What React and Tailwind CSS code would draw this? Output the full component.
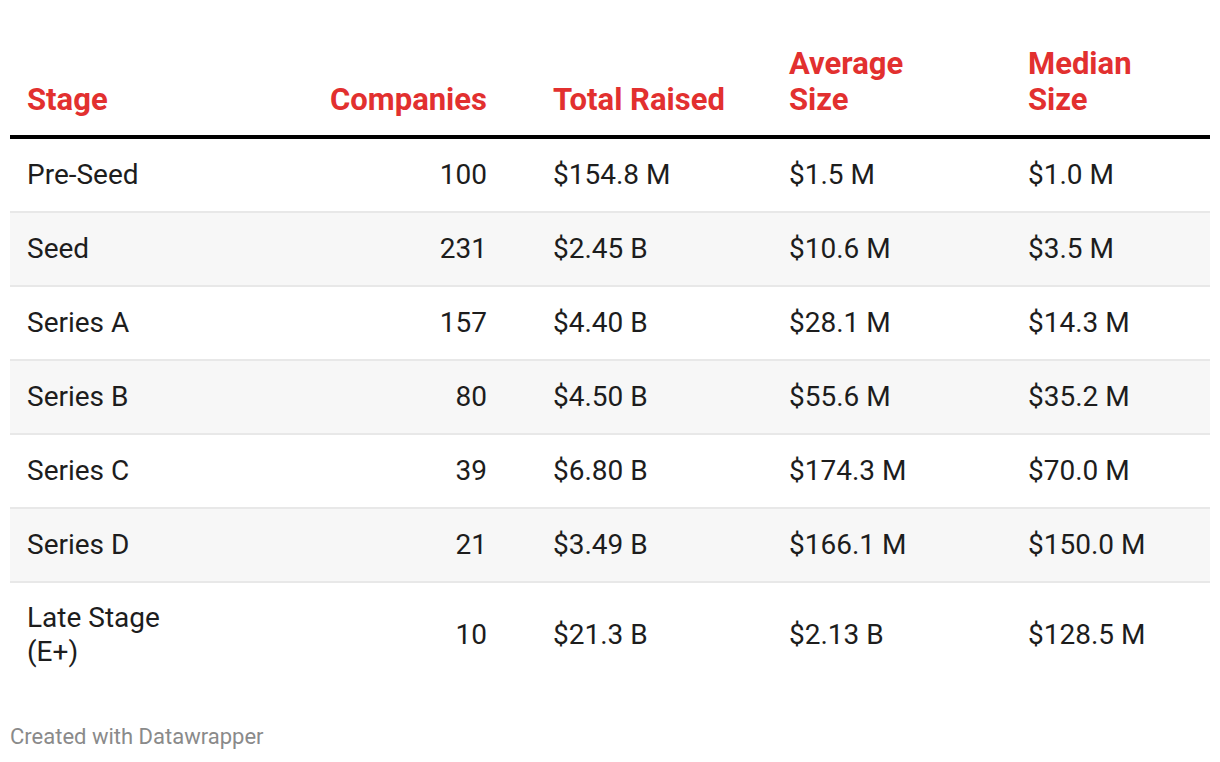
const rows = [
  ['Pre-Seed', '100', '$154.8 M', '$1.5 M', '$1.0 M'],
  ['Seed', '231', '$2.45 B', '$10.6 M', '$3.5 M'],
  ['Series A', '157', '$4.40 B', '$28.1 M', '$14.3 M'],
  ['Series B', '80', '$4.50 B', '$55.6 M', '$35.2 M'],
  ['Series C', '39', '$6.80 B', '$174.3 M', '$70.0 M'],
  ['Series D', '21', '$3.49 B', '$166.1 M', '$150.0 M'],
  ['Late Stage (E+)', '10', '$21.3 B', '$2.13 B', '$128.5 M'],
]

const cols = 'grid grid-cols-[250px_244px_268px_239px_199px]'

export default function App() {
  return (
    <div className="w-[1220px] h-[762px] bg-white px-[10px] pt-[46px] font-['Roboto',sans-serif] text-[#1d1d1d]">
      {/* header */}
      <div className={`${cols} items-end border-b-4 border-black pb-[17px] text-[31px] font-bold leading-[36px] text-[#e2302f]`}>
        <div className="px-[17px]">Stage</div>
        <div className="px-[17px] text-right">Companies</div>
        <div className="pl-[49px] pr-[17px]">Total Raised</div>
        <div className="px-[17px]">Average<br />Size</div>
        <div className="px-[17px]">Median<br />Size</div>
      </div>

      {/* body rows */}
      {rows.map((r, i) => {
        const last = i === rows.length - 1
        return (
          <div
            key={r[0]}
            className={`${cols} items-center text-[28px] leading-[34px] ${i % 2 ? 'bg-[#f7f7f7]' : 'bg-white'} ${last ? 'h-[104px]' : 'h-[74px] border-b-2 border-[#e8e8e8]'}`}
          >
            <div className="px-[17px] max-w-[190px]">{r[0]}</div>
            <div className="px-[17px] text-right">{r[1]}</div>
            <div className="pl-[49px] pr-[17px]">{r[2]}</div>
            <div className="px-[17px]">{r[3]}</div>
            <div className="px-[17px]">{r[4]}</div>
          </div>
        )
      })}

      <div className="mt-[38px] text-[22px] leading-[24px] text-[#8a8a8a]">Created with Datawrapper</div>
    </div>
  )
}
